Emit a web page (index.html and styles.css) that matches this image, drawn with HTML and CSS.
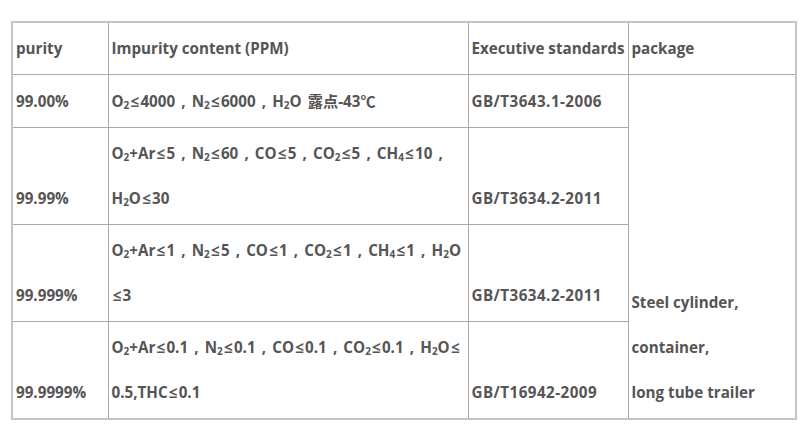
FILE: index.html
```html
<!DOCTYPE html>
<html>
<head>
<meta charset="utf-8">
<link rel="stylesheet" href="styles.css">
</head>
<body>
<table class="spec">
  <colgroup>
    <col class="c1"><col class="c2"><col class="c3"><col class="c4">
  </colgroup>
  <tr class="r-head">
    <td>purity</td>
    <td>Impurity content (PPM)</td>
    <td>Executive standards</td>
    <td>package</td>
  </tr>
  <tr class="r-one">
    <td>99.00%</td>
    <td class="imp">O<sub>2</sub><span class="le">≤</span>4000 , N<sub>2</sub><span class="le">≤</span>6000 , H<sub>2</sub>O <span class="cjk">露点</span>-43℃</td>
    <td class="std">GB/T3643.1-2006</td>
    <td rowspan="4" class="pkg">Steel cylinder,<br>container,<br>long tube trailer</td>
  </tr>
  <tr class="r-two">
    <td>99.99%</td>
    <td class="imp">O<sub>2</sub>+Ar<span class="le">≤</span>5 , N<sub>2</sub><span class="le">≤</span>60 , CO<span class="le">≤</span>5 , CO<sub>2</sub><span class="le">≤</span>5 , CH<sub>4</sub><span class="le">≤</span>10 ,<br>H<sub>2</sub>O<span class="le">≤</span>30</td>
    <td class="std">GB/T3634.2-2011</td>
  </tr>
  <tr class="r-two">
    <td>99.999%</td>
    <td class="imp">O<sub>2</sub>+Ar<span class="le">≤</span>1 , N<sub>2</sub><span class="le">≤</span>5 , CO<span class="le">≤</span>1 , CO<sub>2</sub><span class="le">≤</span>1 , CH<sub>4</sub><span class="le">≤</span>1 , H<sub>2</sub>O<br><span class="le">≤</span>3</td>
    <td class="std">GB/T3634.2-2011</td>
  </tr>
  <tr class="r-two">
    <td>99.9999%</td>
    <td class="imp">O<sub>2</sub>+Ar<span class="le">≤</span>0.1 , N<sub>2</sub><span class="le">≤</span>0.1 , CO<span class="le">≤</span>0.1 , CO<sub>2</sub><span class="le">≤</span>0.1 , H<sub>2</sub>O<span class="le">≤</span><br>0.5,THC<span class="le">≤</span>0.1</td>
    <td class="std">GB/T16942-2009</td>
  </tr>
</table>
</body>
</html>
```
FILE: styles.css
```css
html, body {
  margin: 0;
  background: #ffffff;
}
body {
  padding: 21px 0 0 11px;
  font-family: "Open Sans", "Noto Sans CJK SC", sans-serif;
  font-weight: 700;
  font-size: 15.2px;
  color: #555555;
}
.spec {
  border-collapse: collapse;
  table-layout: fixed;
  width: 784px;
  border: 2px solid #c4c4c4;
}
.c1 { width: 96px; }
.c2 { width: 360px; }
.c3 { width: 160px; }
.c4 { width: 168px; }
.spec td {
  border: 1px solid #a9a9a9;
  padding: 3px 2px 3px 3px;
  line-height: 45px;
  vertical-align: bottom;
  white-space: nowrap;
  overflow: hidden;
}
.r-head td, .r-one td { height: 45px; }
.r-two td { height: 90px; }
.spec .imp { word-spacing: 2.2px; }
.spec .std { letter-spacing: 0.45px; }
.le { padding: 0 1.2px; }
.spec sub {
  font-size: 10px;
  vertical-align: -2px;
  line-height: 0;
}
.cjk {
  font-family: "Noto Sans CJK SC", sans-serif;
  font-weight: 700;
}
```
